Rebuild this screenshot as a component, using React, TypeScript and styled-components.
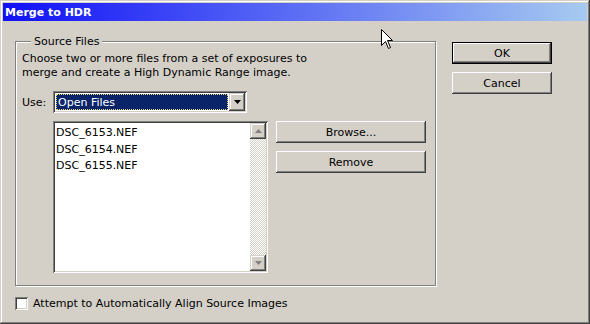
import styled, { createGlobalStyle } from 'styled-components';

const Global = createGlobalStyle`
  html, body { margin: 0; padding: 0; background: #d4d0c8; }
  body {
    font-family: "DejaVu Sans", Verdana, sans-serif;
    font-size: 11px;
    color: #000;
  }
`;

const Window = styled.div`
  position: relative;
  width: 590px;
  height: 324px;
  box-sizing: border-box;
  padding: 3px;
  background: #d4d0c8;
  box-shadow: inset -1px -1px #404040, inset 1px 1px #d4d0c8,
    inset -2px -2px #808080, inset 2px 2px #ffffff;
  display: flex;
  flex-direction: column;
`;

const TitleBar = styled.div`
  height: 18px;
  display: flex;
  align-items: center;
  padding-left: 2px;
  background: linear-gradient(to right, #1010f8, #a6caf0);
  color: #fff;
  font-weight: bold;
  font-size: 11px;
`;

const Body = styled.div`
  display: flex;
  padding: 20px 0 0 12px;
`;

const MainCol = styled.div`
  display: flex;
  flex-direction: column;
`;

const Group = styled.div`
  position: relative;
  width: 421px;
  height: 245px;
  box-sizing: border-box;
  border: 1px solid #808080;
  box-shadow: inset 1px 1px #fff, 1px 1px #fff;
  padding: 10px 6px 0 6px;
  display: flex;
  flex-direction: column;
`;

const Legend = styled.span`
  position: absolute;
  top: -7px;
  left: 15px;
  padding: 0 3px;
  background: #d4d0c8;
  line-height: 13px;
`;

const Intro = styled.p`
  margin: 0;
  line-height: 14px;
`;

const UseRow = styled.div`
  display: flex;
  align-items: center;
  margin-top: 11px;
`;

const Label = styled.span`
  width: 31px;
`;

const Sunken = styled.div`
  box-sizing: border-box;
  background: #fff;
  box-shadow: inset 1px 1px #808080, inset -1px -1px #fff,
    inset 2px 2px #404040, inset -2px -2px #d4d0c8;
  padding: 2px;
`;

const Select = styled(Sunken)`
  width: 194px;
  height: 22px;
  display: flex;
`;

const Selected = styled.div`
  flex: 1;
  margin: 1px;
  background: #0a246a;
  color: #fff;
  outline: 1px dotted #e8d878;
  outline-offset: -1px;
  display: flex;
  align-items: center;
  padding-left: 2px;
`;

const ArrowButton = styled.div`
  width: 16px;
  box-sizing: border-box;
  background: #d4d0c8;
  box-shadow: inset -1px -1px #404040, inset 1px 1px #d4d0c8,
    inset -2px -2px #808080, inset 2px 2px #fff;
  display: flex;
  align-items: center;
  justify-content: center;
`;

const ListRow = styled.div`
  display: flex;
  margin-top: 8px;
  padding-left: 31px;
`;

const ListBox = styled(Sunken)`
  width: 215px;
  height: 152px;
  display: flex;
`;

const Items = styled.div`
  flex: 1;
  padding: 2px 0 0 1px;
  line-height: 16.5px;
`;

const ScrollBar = styled.div`
  width: 16px;
  display: flex;
  flex-direction: column;
  background-image: conic-gradient(#fff 25%, #d4d0c8 0 50%, #fff 0 75%, #d4d0c8 0);
  background-size: 2px 2px;
`;

const ScrollBtn = styled(ArrowButton)`
  height: 16px;
`;

const Track = styled.div`
  flex: 1;
`;

const SideButtons = styled.div<{ $gap: number }>`
  display: flex;
  flex-direction: column;
  gap: ${p => p.$gap}px;
`;

const Button = styled.div<{ $width: number; $default?: boolean }>`
  width: ${p => p.$width}px;
  height: 22px;
  box-sizing: border-box;
  display: flex;
  align-items: center;
  justify-content: center;
  background: #d4d0c8;
  box-shadow: ${p =>
    p.$default
      ? 'inset 0 0 0 1px #000, inset -2px -2px #404040, inset 2px 2px #fff, inset -3px -3px #808080'
      : 'inset -1px -1px #404040, inset 1px 1px #fff, inset -2px -2px #808080, inset 2px 2px #d4d0c8'};
`;

const ListButtons = styled(SideButtons)`
  margin-left: 8px;
`;

const DialogButtons = styled(SideButtons)`
  margin-left: 16px;
  margin-top: 1px;
`;

const CheckRow = styled.label`
  display: flex;
  align-items: center;
  gap: 5px;
  margin-top: 11px;
`;

const CheckBox = styled(Sunken)`
  width: 13px;
  height: 13px;
`;

const Cursor = styled.svg`
  position: absolute;
  left: 381px;
  top: 29px;
`;

function Triangle({ dir, color }: { dir: 'up' | 'down'; color: string }) {
  const pts = dir === 'down' ? '0,0 7,0 3.5,4' : '0,4 7,4 3.5,0';
  return (
    <svg width="7" height="4" viewBox="0 0 7 4">
      <polygon points={pts} fill={color} />
    </svg>
  );
}

const files = ['DSC_6153.NEF', 'DSC_6154.NEF', 'DSC_6155.NEF'];

export default function App() {
  return (
    <>
      <Global />
      <Window>
        <TitleBar>Merge to HDR</TitleBar>
        <Body>
          <MainCol>
            <Group>
              <Legend>Source Files</Legend>
              <Intro>
                Choose two or more files from a set of exposures to
                <br />
                merge and create a High Dynamic Range image.
              </Intro>
              <UseRow>
                <Label>Use:</Label>
                <Select>
                  <Selected>Open Files</Selected>
                  <ArrowButton>
                    <Triangle dir="down" color="#000" />
                  </ArrowButton>
                </Select>
              </UseRow>
              <ListRow>
                <ListBox>
                  <Items>
                    {files.map(f => (
                      <div key={f}>{f}</div>
                    ))}
                  </Items>
                  <ScrollBar>
                    <ScrollBtn>
                      <Triangle dir="up" color="#808080" />
                    </ScrollBtn>
                    <Track />
                    <ScrollBtn>
                      <Triangle dir="down" color="#808080" />
                    </ScrollBtn>
                  </ScrollBar>
                </ListBox>
                <ListButtons $gap={8}>
                  <Button $width={150}>Browse...</Button>
                  <Button $width={150}>Remove</Button>
                </ListButtons>
              </ListRow>
            </Group>
            <CheckRow>
              <CheckBox />
              Attempt to Automatically Align Source Images
            </CheckRow>
          </MainCol>
          <DialogButtons $gap={8}>
            <Button $width={100} $default>OK</Button>
            <Button $width={100}>Cancel</Button>
          </DialogButtons>
        </Body>
        <Cursor width="13" height="21" viewBox="0 0 13 21">
          <path
            d="M0.5 0.5 L0.5 16.5 L4.5 12.5 L7.5 19.5 L9.5 18.5 L6.5 11.5 L11.5 11.5 Z"
            fill="#fff"
            stroke="#000"
            strokeWidth="1"
          />
        </Cursor>
      </Window>
    </>
  );
}
